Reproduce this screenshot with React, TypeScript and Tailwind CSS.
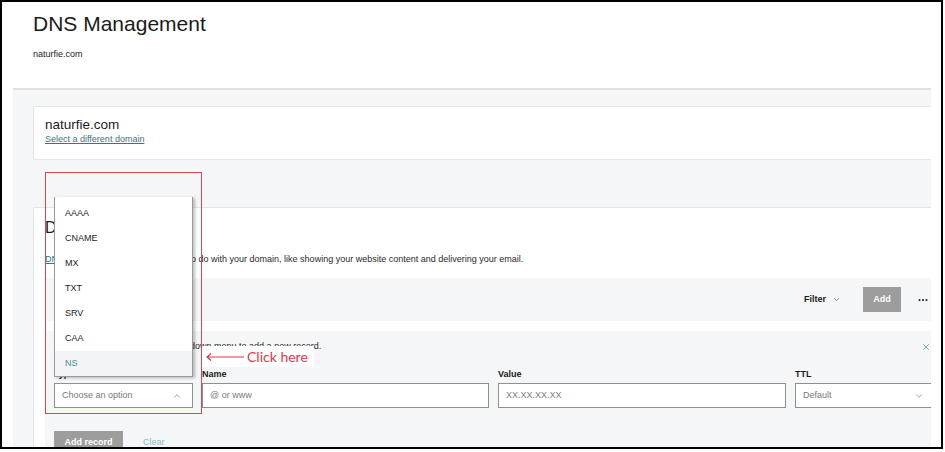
import { ChevronDown, ChevronUp, Ellipsis, X } from "lucide-react";

const recordTypes = ["AAAA", "CNAME", "MX", "TXT", "SRV", "CAA", "NS"];

function Field({ label, placeholder, width, chevron }: { label: string; placeholder: string; width: string; chevron?: "up" | "down" }) {
  return (
    <div className={`${width} shrink-0`}>
      <div className="text-[9px] leading-[12px] font-bold text-[#1b1b1b]">{label}</div>
      <div className="mt-[3px] h-[25px] border border-[#8f8f8f] bg-white flex items-center justify-between pl-[7px] pr-[10px]">
        <span className="text-[9px] text-[#7a7a7a]">{placeholder}</span>
        {chevron === "up" && <ChevronUp size={10} strokeWidth={1.5} className="text-[#666]" />}
        {chevron === "down" && <ChevronDown size={10} strokeWidth={1.5} className="text-[#666]" />}
      </div>
    </div>
  );
}

export default function App() {
  return (
    <div className="relative w-[945px] h-[452px] overflow-hidden bg-white font-['Liberation_Sans',Arial,sans-serif] text-[#1b1b1b]">
      <div className="w-[943px] h-[449px] border-2 border-black overflow-hidden">
        <header className="h-[86px] pl-[31px] pt-[9px]">
          <h1 className="text-[21px] leading-[26px]">DNS Management</h1>
          <p className="mt-[11px] text-[9px] leading-[12px]">naturfie.com</p>
        </header>

        <main className="ml-[11px] w-[918px] h-[400px] overflow-hidden border-t-2 border-[#dfe0e3] bg-[#f5f6f8] pl-[20px] pt-[16px]">
          <section className="h-[54px] border border-r-0 border-[#e3e5e8] bg-white pl-[11px] pt-[10px]">
            <div className="text-[13.5px] leading-[16px]">naturfie.com</div>
            <a className="block text-[9px] leading-[12px] text-[#2c7a86] underline">Select a different domain</a>
          </section>

          <section className="mt-[47px] h-[300px] border-t border-l border-[#e3e5e8] bg-white pl-[11px] pt-[10px]">
            <h2 className="text-[16px] leading-[20px]">DNS Records</h2>
            <p className="mt-[15px] text-[9px] leading-[12px] text-[#2a2a2a]">
              <a className="text-[#2c7a86] underline">DNS records</a> control what you want to do with your domain, like showing your website content and delivering your email.
            </p>

            <div className="mt-[13px] h-[43px] bg-[#f5f6f8] flex items-center justify-end pr-[2px]">
              <span className="flex items-center gap-[6px] text-[9px] font-bold">
                Filter
                <ChevronDown size={9} strokeWidth={1.5} className="text-[#444]" />
              </span>
              <button className="ml-[22px] w-[38px] h-[25px] bg-[#9d9d9d] text-white text-[9px] font-bold">Add</button>
              <Ellipsis size={12} strokeWidth={2.5} className="ml-[16px] text-[#333]" />
            </div>

            <div className="mt-[10px] h-[130px] bg-[#f5f6f8] pl-[9px] pt-[9px]">
              <div className="flex items-start justify-between">
                <span className="text-[9px] leading-[12px] text-[#2a2a2a]">Select a record type from the dropdown menu to add a new record.</span>
                <X size={10} strokeWidth={1.5} className="mt-[2px] text-[#2c7a86]" />
              </div>
              <div className="mt-[16px] flex gap-[9px]">
                <Field label="Type" placeholder="Choose an option" width="w-[139px]" chevron="up" />
                <Field label="Name" placeholder="@ or www" width="w-[287px]" />
                <Field label="Value" placeholder="XX.XX.XX.XX" width="w-[288px]" />
                <Field label="TTL" placeholder="Default" width="w-[140px]" chevron="down" />
              </div>
              <div className="mt-[23px] flex items-center">
                <button className="w-[69px] h-[24px] bg-[#9d9d9d] text-white text-[9px] font-bold">Add record</button>
                <span className="ml-[20px] text-[9px] text-[#8bb9c1]">Clear</span>
              </div>
            </div>
          </section>
        </main>
      </div>

      {/* open dropdown list */}
      <ul className="absolute left-[54px] top-[197px] w-[139px] pt-[4px] bg-white border-x border-b border-[#9a9a9a] shadow-[2px_1px_3px_rgba(0,0,0,0.25)]">
        {recordTypes.map((t) => (
          <li
            key={t}
            className={`h-[25px] pl-[10px] text-[9px] leading-[25px] ${t === "NS" ? "bg-[#f3f4f6] text-[#4a8c98]" : "text-[#1b1b1b]"}`}
          >
            {t}
          </li>
        ))}
      </ul>

      {/* annotation */}
      <div className="absolute left-[45px] top-[172px] w-[157px] h-[242px] border-[1.5px] border-[#e4404e]" />
      <div className="absolute left-[202px] top-[346px] w-[112px] h-[21px] bg-white flex items-center">
        <svg width="40" height="10" viewBox="0 0 40 10" className="ml-[4px] shrink-0">
          <path d="M1 5 H38 M5 1.5 L1 5 L5 8.5" fill="none" stroke="#e8344a" strokeWidth="1.2" />
        </svg>
        <span className="ml-[1px] text-[14px] leading-none text-[#e8344a] font-['Lato',sans-serif]">Click here</span>
      </div>
    </div>
  );
}
